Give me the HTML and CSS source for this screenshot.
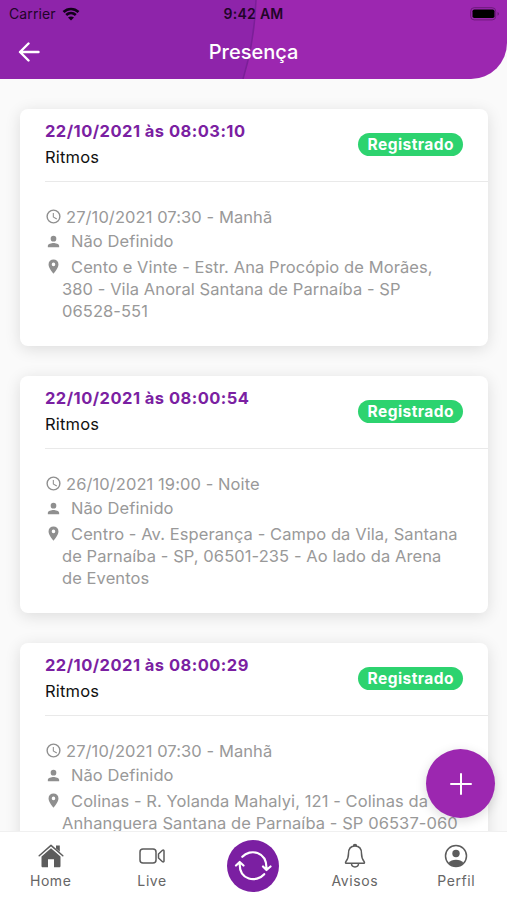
FILE: index.html
```html
<!DOCTYPE html>
<html lang="pt-BR">
<head>
  <meta charset="UTF-8">
  <meta name="viewport" content="width=device-width, initial-scale=1.0">
  <title>Presença</title>
  <link rel="stylesheet" href="styles.css">
</head>
<body>

  <!-- Icons used more than once -->
  <svg class="icon-defs" width="0" height="0">
    <symbol id="clock" viewBox="0 0 24 24">
      <path d="M12 2a10 10 0 1 0 0 20 10 10 0 0 0 0-20zm0 18a8 8 0 1 1 0-16 8 8 0 0 1 0 16zm.5-13H11v6l5.2 3.2.8-1.3-4.5-2.7z"/>
    </symbol>
    <symbol id="person" viewBox="0 0 24 24">
      <path d="M12 12a4 4 0 1 0 0-8 4 4 0 0 0 0 8zm0 2c-2.700 0-8 1.300-8 4v2h16v-2c0-2.700-5.300-4-8-4z"/>
    </symbol>
    <symbol id="pin" viewBox="0 0 24 24">
      <path d="M12 2a7 7 0 0 0-7 7c0 5.200 7 13 7 13s7-7.800 7-13a7 7 0 0 0-7-7zm0 9.500a2.500 2.500 0 1 1 0-5 2.500 2.500 0 0 1 0 5z"/>
    </symbol>
  </svg>

  <div class="app">
    <header class="header">
      <svg class="header-curve" viewBox="0 0 507 79" preserveAspectRatio="none">
        <path class="curve-fill" d="M0 0H256C255 28 250 56 243 79H0z"/>
        <path class="curve-line" d="M256 0C255 28 250 56 243 79"/>
      </svg>
      <div class="status-bar">
        <div class="carrier">
          <span>Carrier</span>
          <svg class="wifi" viewBox="0 0 18 14">
            <path d="M1.500 5C5.800 .9 12.200 .9 16.500 5M4.200 8C7 5.400 11 5.400 13.800 8"/>
            <path class="wifi-dot" d="M9 13.500L6 10.500C7.700 9 10.300 9 12 10.500z"/>
          </svg>
        </div>
        <div class="time">9:42 AM</div>
        <svg class="battery" viewBox="0 0 30 14">
          <rect class="battery-case" x=".7" y=".7" width="25" height="12.200" rx="3.500"/>
          <rect x="2.500" y="2.500" width="22" height="8.600" rx="1.800"/>
          <path class="battery-tip" d="M27.500 5c2 .7 2 3 0 3.800z"/>
        </svg>
      </div>
      <div class="title-bar">
        <svg class="back" viewBox="0 0 22 20"><path d="M10.500 1.500L2 10l8.500 8.500M2 10h18.500"/></svg>
        <h1>Presença</h1>
      </div>
    </header>

    <main class="list">
      <article class="card">
        <div class="card-head">
          <div>
            <h2>22/10/2021 às 08:03:10</h2>
            <p>Ritmos</p>
          </div>
          <span class="badge">Registrado</span>
        </div>
        <div class="card-body">
          <p class="when"><svg><use href="#clock"/></svg>27/10/2021 07:30 - Manhã</p>
          <p class="who"><svg><use href="#person"/></svg>Não Definido</p>
          <p class="where"><svg><use href="#pin"/></svg>Cento e Vinte - Estr. Ana Procópio de Morães,<br>380 - Vila Anoral Santana de Parnaíba - SP<br>06528-551</p>
        </div>
      </article>

      <article class="card">
        <div class="card-head">
          <div>
            <h2>22/10/2021 às 08:00:54</h2>
            <p>Ritmos</p>
          </div>
          <span class="badge">Registrado</span>
        </div>
        <div class="card-body">
          <p class="when"><svg><use href="#clock"/></svg>26/10/2021 19:00 - Noite</p>
          <p class="who"><svg><use href="#person"/></svg>Não Definido</p>
          <p class="where"><svg><use href="#pin"/></svg>Centro - Av. Esperança - Campo da Vila, Santana<br>de Parnaíba - SP, 06501-235 - Ao lado da Arena<br>de Eventos</p>
        </div>
      </article>

      <article class="card">
        <div class="card-head">
          <div>
            <h2>22/10/2021 às 08:00:29</h2>
            <p>Ritmos</p>
          </div>
          <span class="badge">Registrado</span>
        </div>
        <div class="card-body">
          <p class="when"><svg><use href="#clock"/></svg>27/10/2021 07:30 - Manhã</p>
          <p class="who"><svg><use href="#person"/></svg>Não Definido</p>
          <p class="where"><svg><use href="#pin"/></svg>Colinas - R. Yolanda Mahalyi, 121 - Colinas da<br>Anhanguera Santana de Parnaíba - SP 06537-060</p>
        </div>
      </article>
    </main>

    <button class="fab" aria-label="Adicionar">
      <svg viewBox="0 0 24 24"><path d="M12 2v20M2 12h20"/></svg>
    </button>

    <!-- Bottom tabs -->
    <nav class="tabs">
      <a class="tab">
        <svg class="home" viewBox="0 0 26 26">
          <path class="solid" d="M13 5.200L3.500 13.500V23c0 .8.500 1.300 1.300 1.300H10v-8h6v8h5.200c.8 0 1.300-.5 1.300-1.300v-9.500z"/>
          <path class="solid" d="M18 2.500h3.800v6.300L18 5.500z"/>
          <path d="M1.200 12.800L13 2.400l11.800 10.400"/>
        </svg>
        <span>Home</span>
      </a>
      <a class="tab">
        <svg viewBox="0 0 26 26">
          <rect x="1" y="6" width="16" height="14" rx="3"/>
          <path d="M19.500 11l4-3.700c.7-.5 1.500-.2 1.500.6v10.200c0 .8-.8 1.100-1.500.6l-4-3.700z"/>
        </svg>
        <span>Live</span>
      </a>
      <a class="tab-main" aria-label="Sincronizar">
        <svg viewBox="0 0 52 52">
          <path d="M15.300 16.800C23 8.500 40 11 39.500 29M36 26.500l3.500 3.500 4-3.500M37.200 34.200C29.500 43 12 40.500 12.700 23M9 25.500l3.700-3.500 3.800 3.500"/>
        </svg>
      </a>
      <a class="tab">
        <svg viewBox="0 0 26 26">
          <path d="M13 3c-5 0-6.500 4-6.500 7.500 0 5-1.200 6.500-2.700 8.300-.6.800-.2 1.500.7 1.500h17c.9 0 1.300-.7.7-1.500-1.500-1.800-2.700-3.300-2.700-8.300C19.500 7 18 3 13 3zM11.500 3c0-2 3-2 3 0M9.500 20.500c0 4.500 7 4.500 7 0"/>
        </svg>
        <span>Avisos</span>
      </a>
      <a class="tab">
        <svg viewBox="0 0 26 26">
          <circle cx="13" cy="13" r="10.500"/>
          <circle class="solid" cx="13" cy="10.500" r="3.700"/>
          <path class="solid" d="M5.500 20c3-4.300 12-4.300 15 0-3.500 4.500-11.500 4.500-15 0z"/>
        </svg>
        <span>Perfil</span>
      </a>
    </nav>
  </div>

</body>
</html>
```
FILE: styles.css
```css
* { box-sizing: border-box; }
body {
  margin: 0;
  font-family: Inter, "Liberation Sans", sans-serif;
  background: #fafafa;
  color: #111;
}
h1, h2, p { margin: 0; }
svg { display: block; flex-shrink: 0; }
.icon-defs { position: absolute; }

.app {
  height: 900px;
  display: flex;
  flex-direction: column;
  overflow: hidden;
  position: relative;
}

/* Header */
.header {
  position: relative;
  flex-shrink: 0;
  height: 79px;
  background: #9c27b0;
  border-bottom-right-radius: 36px;
  overflow: hidden;
}
.header-curve {
  position: absolute;
  top: 0;
  left: 0;
  width: 100%;
  height: 100%;
}
.curve-fill { fill: #8e24aa; }
.curve-line {
  fill: none;
  stroke: #7b1f98;
  stroke-width: 1.5;
}
.status-bar {
  position: relative;
  display: grid;
  grid-template-columns: 1fr auto 1fr;
  align-items: center;
  height: 27px;
  padding: 0 7px 0 9px;
  font-size: 14px;
  color: #210528;
}
.carrier {
  display: flex;
  align-items: center;
  gap: 6px;
  letter-spacing: 0.1px;
}
.wifi {
  width: 18px;
  height: 14px;
  fill: none;
  stroke: #12021a;
  stroke-width: 2.6;
}
.wifi-dot { fill: #12021a; stroke: none; }
.time {
  margin-right: 2px;
  font-weight: 600;
  letter-spacing: 0.3px;
}
.battery {
  justify-self: end;
  width: 30px;
  height: 14px;
}
.battery-case {
  fill: none;
  stroke: #6d1b7b;
}
.battery-tip { fill: #6d1b7b; }
.title-bar {
  position: relative;
  display: grid;
  grid-template-columns: 1fr auto 1fr;
  align-items: center;
  height: 50px;
  padding: 0 18px;
}
.back {
  width: 22px;
  height: 20px;
  fill: none;
  stroke: #fff;
  stroke-width: 2.4;
  stroke-linecap: round;
  stroke-linejoin: round;
}
h1 {
  font-size: 20px;
  font-weight: 550;
  color: #fff;
}

/* Cards */
.list {
  flex: 1;
  min-height: 0;
  overflow: hidden;
  padding: 30px 19px 0 20px;
}
.card {
  height: 237px;
  margin-bottom: 30px;
  background: #fff;
  border-radius: 8px;
  box-shadow: 0 3px 16px rgba(0, 0, 0, 0.12);
}
.card-head {
  display: flex;
  justify-content: space-between;
  align-items: center;
  height: 73px;
  margin-left: 25px;
  padding: 0 25px 2px 0;
  border-bottom: 1px solid #e9e9e9;
}
.card-head p,
.card-head h2 {
  font-size: 16.5px;
  line-height: 26px;
}
.card-head p { letter-spacing: 0.2px; }
.card-head h2 {
  font-weight: 650;
  letter-spacing: 0.46px;
  color: #7b1fa2;
}
.badge {
  height: 23px;
  padding: 0 9px 0 10px;
  border-radius: 12px;
  background: #2dd36f;
  color: #fff;
  font-size: 15.5px;
  font-weight: 650;
  letter-spacing: 0.45px;
  line-height: 23px;
}
.card-body {
  padding: 22px 0 0 25px;
  font-size: 16.5px;
  letter-spacing: 0.08px;
  color: #999;
  white-space: nowrap;
}
.card-body svg {
  width: 17px;
  height: 17px;
  fill: #8f8f8f;
}
.when,
.who {
  display: flex;
  align-items: center;
  height: 25px;
}
.when svg { margin-right: 4px; }
.who svg { margin-right: 9px; }
.who { height: 24px; }
.where {
  padding: 3px 0 0 17px;
  line-height: 22px;
}
.where svg {
  float: left;
  margin: 2px 9px 0 -17px;
}

/* Floating button */
.fab {
  position: absolute;
  right: 12px;
  bottom: 82px;
  width: 69px;
  height: 69px;
  padding: 0;
  display: flex;
  justify-content: center;
  align-items: center;
  border: none;
  border-radius: 50%;
  background: #9c27b0;
  box-shadow: 0 3px 12px rgba(0, 0, 0, 0.14);
}
.fab svg {
  width: 24px;
  height: 24px;
  fill: none;
  stroke: #fff;
  stroke-width: 2;
  stroke-linecap: round;
}

/* Tabs */
.tabs {
  position: relative;
  display: grid;
  grid-template-columns: repeat(5, 1fr);
  height: 69px;
  flex-shrink: 0;
  background: #fff;
  border-top: 1px solid #f0f0f0;
}
.tab {
  display: flex;
  flex-direction: column;
  align-items: center;
  padding-top: 11px;
  gap: 3px;
  font-size: 14px;
  line-height: 18px;
  letter-spacing: 0.6px;
  color: #666;
}
.tab svg {
  width: 26px;
  height: 26px;
  fill: none;
  stroke: #5c5c5c;
  stroke-width: 1.5;
  stroke-linejoin: round;
  stroke-linecap: round;
}
.tab .solid { fill: #5c5c5c; stroke: none; }
.tab-main {
  justify-self: center;
  width: 52px;
  height: 52px;
  margin-top: 8px;
  border-radius: 50%;
  background: #7b1fa2;
}
.tab-main svg {
  fill: none;
  stroke: #fff;
  stroke-width: 2.2;
  stroke-linecap: round;
  stroke-linejoin: round;
}
```
